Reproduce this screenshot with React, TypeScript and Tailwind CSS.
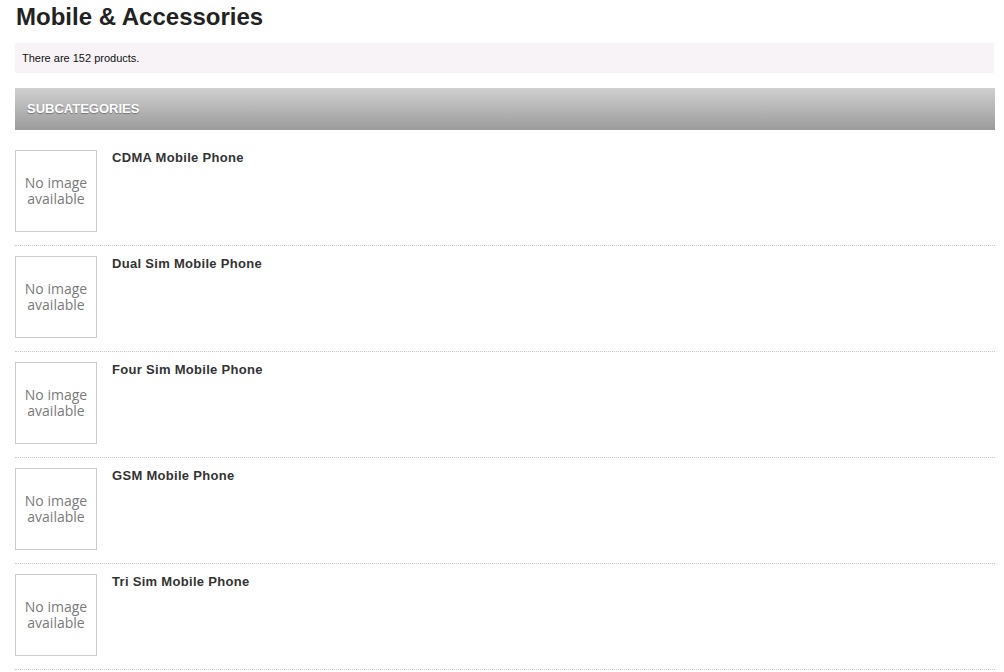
import React from "react";

const items = [
  "CDMA Mobile Phone",
  "Dual Sim Mobile Phone",
  "Four Sim Mobile Phone",
  "GSM Mobile Phone",
  "Tri Sim Mobile Phone",
];

export default function App() {
  return (
    <div className="w-[1004px] h-[672px] overflow-hidden bg-white font-['Liberation_Sans',Arial,sans-serif]">
      <div className="w-[980px] ml-[15px]">
        <h1 className="text-[24px] leading-[28px] font-bold text-[#222] pt-[3px] pl-[1px]">
          Mobile &amp; Accessories
        </h1>
        <div className="mt-[12px] h-[30px] bg-[#f7f3f6] flex items-center pl-[7px] text-[11px] text-[#111] w-[979px]">
          There are 152 products.
        </div>
        <div className="mt-[15px] h-[42px] bg-gradient-to-b from-[#d0d0d0] to-[#9b9b9b] flex items-center pl-[12px]">
          <span className="text-white font-bold text-[13px] [text-shadow:0_1px_1px_rgba(0,0,0,0.35)]">
            SUBCATEGORIES
          </span>
        </div>
        <div className="mt-[20px]">
          {items.map((name) => (
            <div key={name} className="border-b border-dotted border-[#c8c8c8] pb-[13px] mb-[10px] flex">
              <div className="w-[82px] h-[82px] border border-[#cccccc] flex flex-col items-center justify-center text-center text-[14px] leading-[16px] text-[#7a7a7a] font-['Open_Sans',sans-serif]">
                <span className="block">No image</span>
                <span className="block">available</span>
              </div>
              <div className="ml-[15px] text-[13px] leading-[16px] font-bold text-[#333] tracking-[0.3px]">
                {name}
              </div>
            </div>
          ))}
        </div>
      </div>
    </div>
  );
}
